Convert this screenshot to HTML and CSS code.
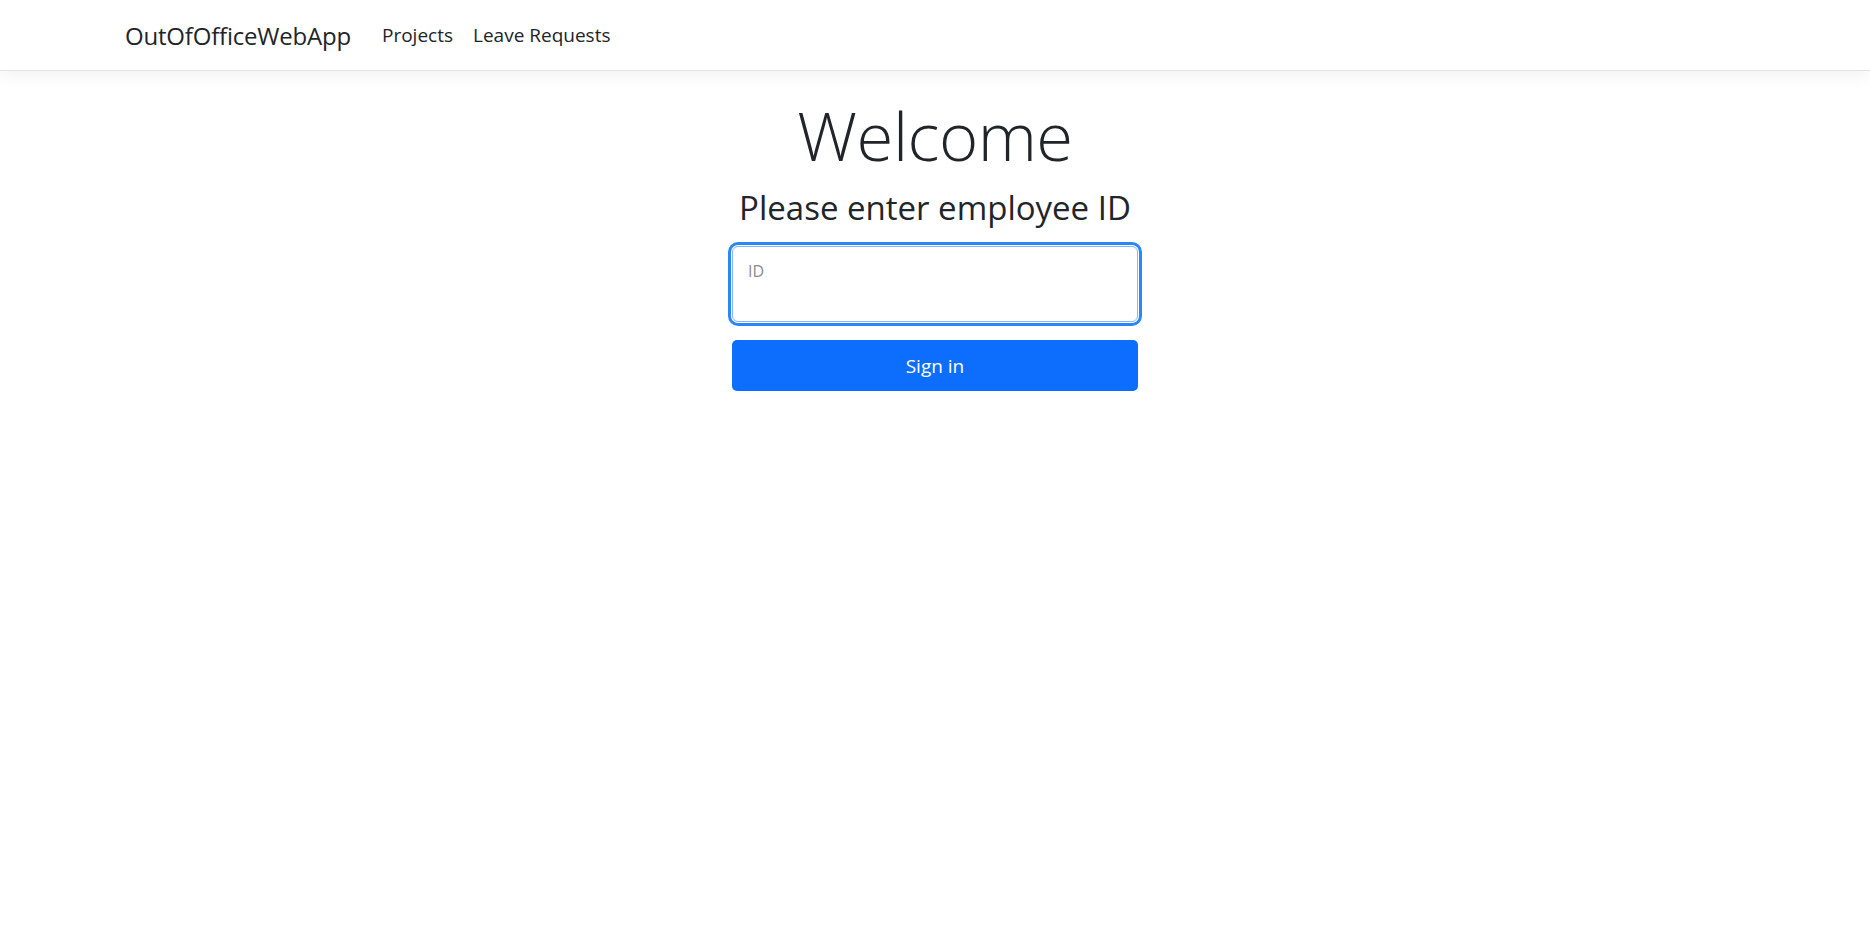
FILE: index.html
```html
<!DOCTYPE html>
<html lang="en">
<head>
<meta charset="utf-8">
<title>OutOfOfficeWebApp</title>
<link rel="stylesheet" href="styles.css">
</head>
<body>
<header class="navbar">
  <div class="navbar-container">
    <a class="brand" href="#">OutOfOfficeWebApp</a>
    <nav class="nav-links">
      <a class="nav-link" href="#">Projects</a>
      <a class="nav-link" href="#">Leave Requests</a>
    </nav>
  </div>
</header>
<main class="main">
  <h1 class="welcome">Welcome</h1>
  <h3 class="subtitle">Please enter employee ID</h3>
  <form class="signin">
    <div class="floating">
      <input class="field" type="text" id="empid">
      <label class="float-label" for="empid">ID</label>
    </div>
    <button class="btn-primary" type="button">Sign in</button>
  </form>
</main>
</body>
</html>
```
FILE: styles.css
```css
* { box-sizing: border-box; }
html, body { margin: 0; padding: 0; }
body {
  font-family: "Segoe UI", "Open Sans", "Noto Sans", sans-serif;
  color: #212529;
  background: #fff;
}
.navbar {
  height: 71px;
  border-bottom: 1px solid #e3e3e3;
  box-shadow: 0 5px 15px rgba(0,0,0,0.05);
  background: #fff;
}
.navbar-container {
  max-width: 1650px;
  margin: 0 auto;
  padding: 0 15px;
  height: 70px;
  display: flex;
  align-items: center;
}
.brand {
  font-size: 24px;
  color: #212529;
  text-decoration: none;
  margin-right: 21px;
  letter-spacing: -0.2px;
}
.nav-links { display: flex; }
.nav-link {
  font-size: 19px;
  color: #212529;
  text-decoration: none;
  padding: 0 10px;
}
.main {
  display: flex;
  flex-direction: column;
  align-items: center;
  padding-top: 22px;
}
.welcome {
  font-size: 67px;
  font-weight: 300;
  line-height: 84px;
  margin: 0 0 10px;
  letter-spacing: -0.5px;
}
.subtitle {
  font-size: 33px;
  font-weight: 400;
  line-height: 42px;
  margin: 0 0 17px;
}
.signin {
  width: 406px;
  display: flex;
  flex-direction: column;
  gap: 18px;
}
.floating { position: relative; }
.field {
  display: block;
  width: 100%;
  height: 76px;
  border: 1px solid #86b7fe;
  border-radius: 6px;
  outline: 3px solid #2b87f7;
  outline-offset: 1px;
  background: #fff;
  font-size: 20px;
  padding: 30px 16px 8px;
}
.float-label {
  position: absolute;
  left: 16px;
  top: 14px;
  font-size: 16px;
  color: #8a8d90;
}
.btn-primary {
  height: 51px;
  border: none;
  border-radius: 5px;
  background: #0d6efd;
  color: #fff;
  font-family: inherit;
  font-size: 19px;
}
```
